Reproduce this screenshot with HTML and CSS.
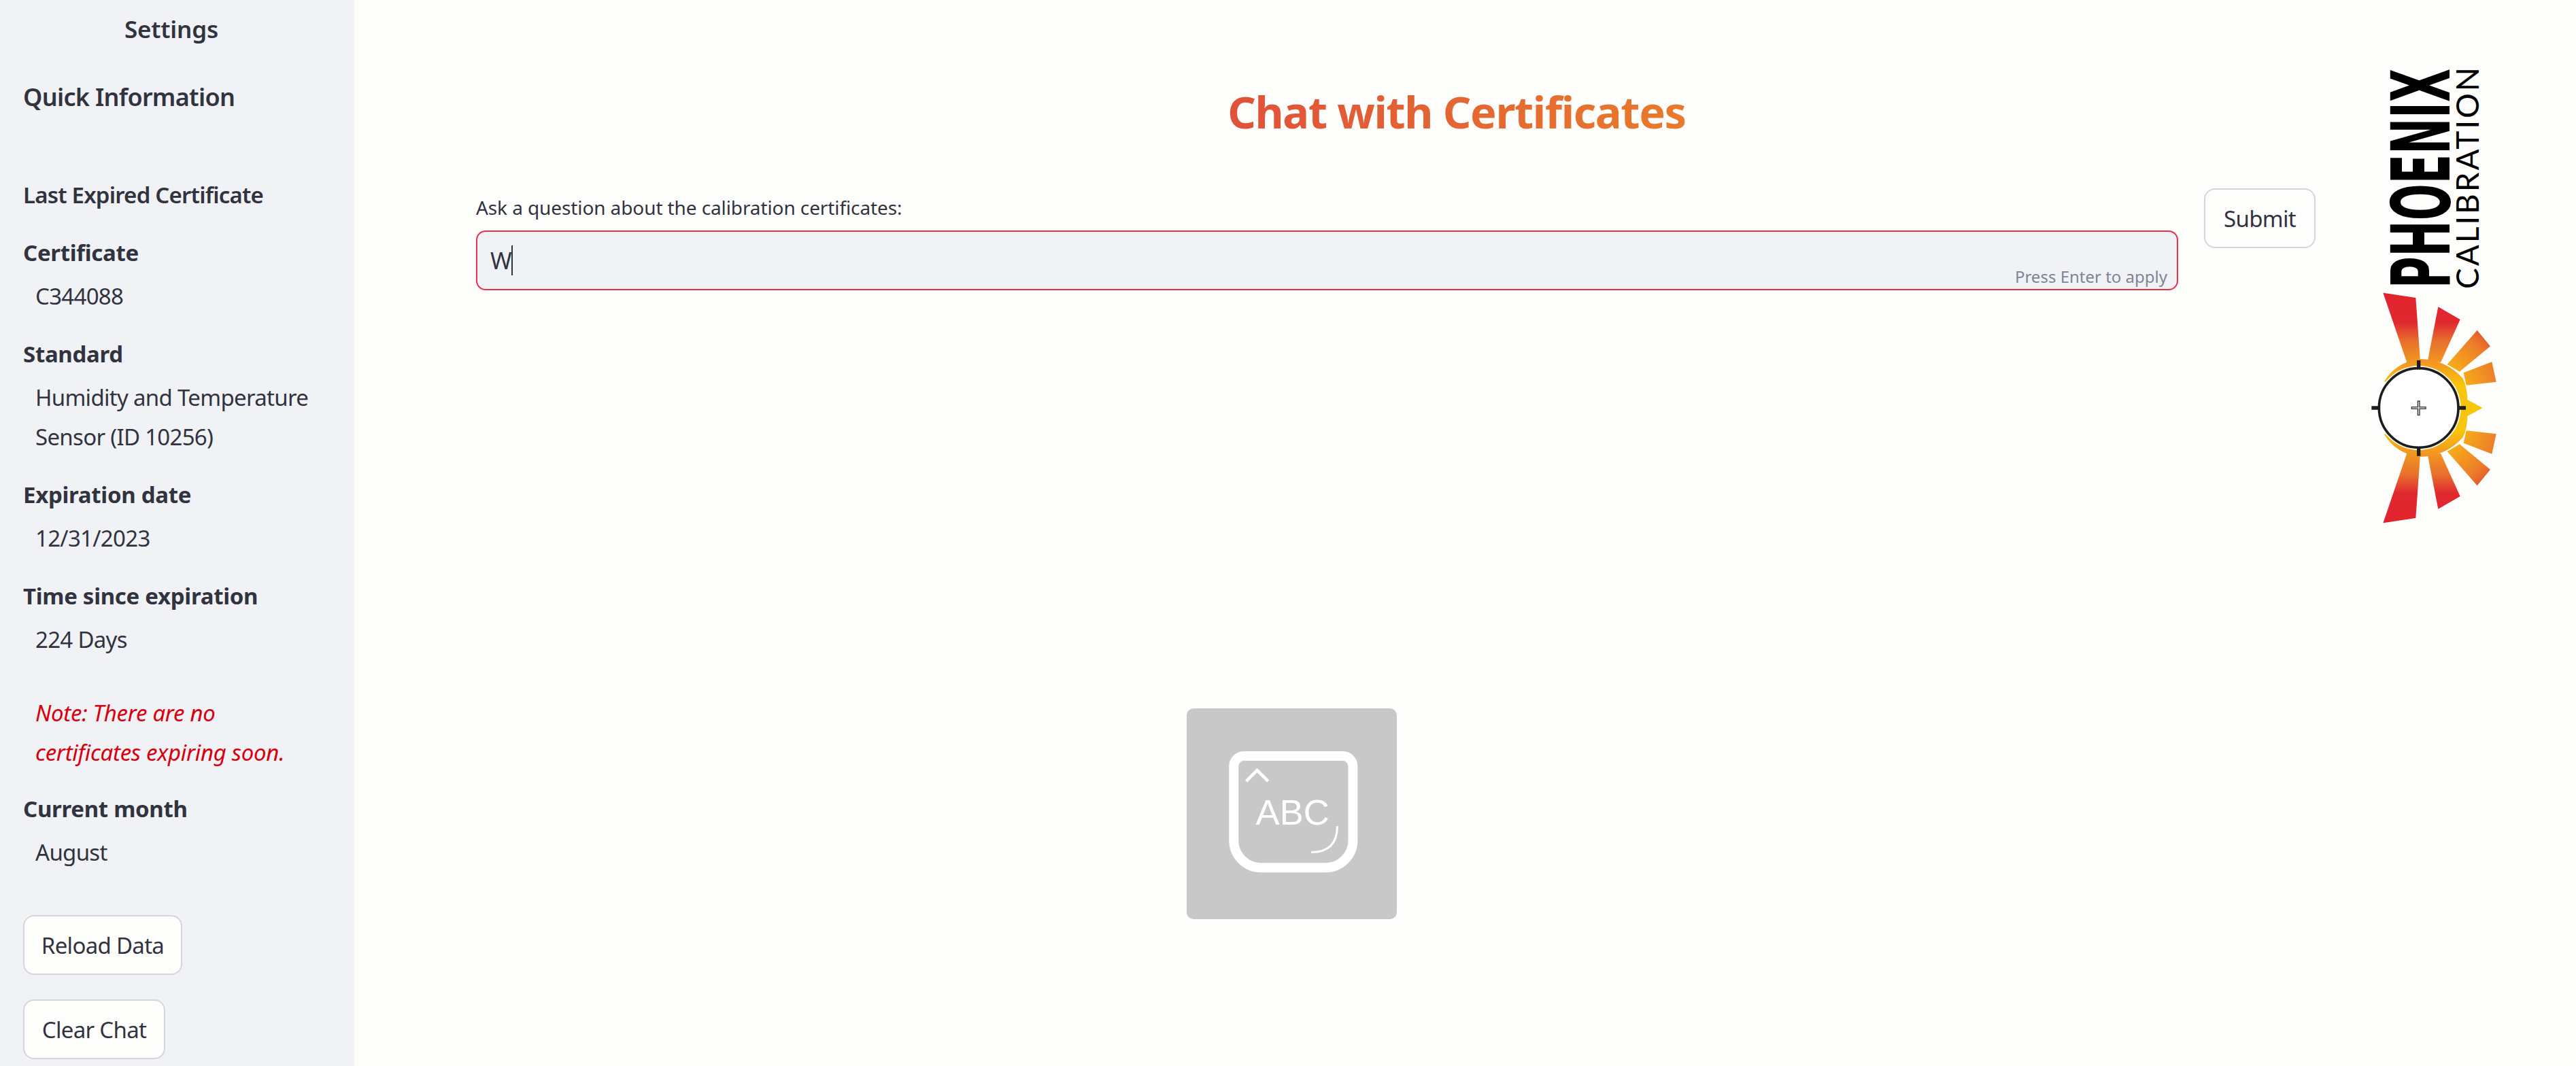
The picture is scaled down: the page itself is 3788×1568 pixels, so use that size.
FILE: index.html
```html
<!DOCTYPE html>
<html lang="en">
<head>
  <meta charset="UTF-8" />
  <title>Chat with Certificates</title>
  <link rel="stylesheet" href="styles.css">
</head>
<body>
  <aside class="sidebar">
    <div class="side-title">Settings</div>
    <h2 class="quick-title">Quick Information</h2>
    <div class="last-title">Last Expired Certificate</div>

    <div class="info-key">Certificate</div>
    <div class="info-val">C344088</div>
    <div class="info-key">Standard</div>
    <div class="info-val">Humidity and Temperature<br>Sensor (ID 10256)</div>
    <div class="info-key">Expiration date</div>
    <div class="info-val">12/31/2023</div>
    <div class="info-key">Time since expiration</div>
    <div class="info-val">224 Days</div>
    <div class="note">Note: There are no<br>certificates expiring soon.</div>
    <div class="info-key">Current month</div>
    <div class="info-val">August</div>

    <div class="side-buttons">
      <button class="btn btn-reload">Reload Data</button>
      <button class="btn btn-clear">Clear Chat</button>
    </div>
  </aside>

  <main class="main">
    <div class="content">
      <h1 class="page-title"><span>Chat with Certificates</span></h1>
      <div class="ask-row">
        <div class="ask-field">
          <label class="ask-label">Ask a question about the calibration certificates:</label>
          <div class="ask-input">
            <span class="typed">W</span><span class="caret"></span>
            <span class="hint">Press Enter to apply</span>
          </div>
        </div>
        <button class="btn btn-submit">Submit</button>
      </div>
    </div>

    <svg class="logo" viewBox="0 0 280 740" width="280" height="740">
      <defs>
        <linearGradient id="sunFill" gradientUnits="userSpaceOnUse" x1="0" y1="92" x2="0" y2="1108">
          <stop offset="0" stop-color="#e0242f"/>
          <stop offset=".13" stop-color="#e0282f"/>
          <stop offset=".21" stop-color="#e8702c"/>
          <stop offset=".31" stop-color="#f39a20"/>
          <stop offset=".4" stop-color="#f8c40c"/>
          <stop offset=".6" stop-color="#f8c40c"/>
          <stop offset=".69" stop-color="#f39a20"/>
          <stop offset=".79" stop-color="#e8702c"/>
          <stop offset=".87" stop-color="#e0282f"/>
          <stop offset="1" stop-color="#e0242f"/>
        </linearGradient>
        <radialGradient id="rayFill" gradientUnits="userSpaceOnUse" cx="350" cy="600" r="440">
          <stop offset=".5" stop-color="#f6b016"/>
          <stop offset=".65" stop-color="#f39a20"/>
          <stop offset=".85" stop-color="#ec7d29"/>
          <stop offset="1" stop-color="#e2552f"/>
        </radialGradient>
      </defs>
      <text class="logo-big" transform="translate(162 364) rotate(-90) scale(.5347 1)" textLength="604" lengthAdjust="spacingAndGlyphs">PHOENIX</text>
      <text class="logo-small" transform="translate(205 365) rotate(-90)" textLength="326">CALIBRATION</text>
      <g transform="translate(0 340) scale(.33333)">
        <g fill="url(#sunFill)">
          <polygon points="193,92 337,114 357,395 298,400"/>
          <polygon points="436,154 533,210 447,400 390,390"/>
          <polygon points="530,545 632,600 530,655"/>
          <polygon points="533,990 436,1046 390,810 447,800"/>
          <polygon points="337,1086 193,1108 298,800 357,805"/>
          <path d="M198 482Q250 400 350 384Q470 385 545 470Q570 520 565 600Q570 680 545 730Q470 815 350 816Q250 800 198 718L350 600Z"/>
        </g>
        <g fill="url(#rayFill)">
          <polygon points="608,257 666,328 530,440 476,408"/>
          <polygon points="673,397 692,485 560,500 548,445"/>
          <polygon points="692,715 673,803 548,755 560,700"/>
          <polygon points="666,872 608,943 476,792 530,760"/>
        </g>
        <circle cx="350" cy="600" r="186" fill="#fff"/>
        <circle cx="350" cy="600" r="175" fill="#fff" stroke="#1d1d1b" stroke-width="11"/>
        <path d="M350 390V430M350 772V812M142 600H180M525 600H558" stroke="#1d1d1b" stroke-width="16"/>
        <path d="M350 568V634M317 600H383" stroke="#3a3a3a" stroke-width="12"/>
        <path d="M350 572V630M321 600H379" stroke="#d8d8d8" stroke-width="4"/>
      </g>
    </svg>

    <div class="key-tile">
      <svg viewBox="135 65 928 930" width="309" height="310">
        <path d="M388 275H824A45 45 0 0 1 869 320V648A120 120 0 0 1 749 768H463A120 120 0 0 1 343 648V320A45 45 0 0 1 388 275Z" fill="none" stroke="#fff" stroke-width="42"/>
        <path d="M398 386L446 338L495 386" fill="none" stroke="#fff" stroke-width="14"/>
        <path d="M800 585Q800 700 685 700" fill="none" stroke="#fff" stroke-width="9"/>
        <text class="key-text" x="440" y="577" textLength="325" lengthAdjust="spacingAndGlyphs">ABC</text>
      </svg>
    </div>
  </main>
</body>
</html>
```

FILE: styles.css
```css
* { box-sizing: border-box; }
html, body {
  margin: 0;
  padding: 0;
  height: 100%;
  overflow: hidden;
  background: #fdfdfc;
  color: #31333f;
  font-family: "Noto Sans", sans-serif;
  font-size: 33px;
  letter-spacing: -.7px;
}
body { display: flex; }

.sidebar {
  width: 521px;
  height: 1568px;
  flex: none;
  padding: 14px 0 0 34px;
  background: #f0f2f6;
  line-height: 58px;
}
.side-title {
  padding-right: 51px;
  text-align: center;
  font-weight: 600;
  font-size: 35px;
  letter-spacing: -.2px;
}
.quick-title {
  margin: 41px 0 0;
  line-height: 60px;
  font-size: 36px;
  font-weight: 600;
  letter-spacing: -.7px;
}
.last-title {
  margin-top: 85px;
  font-size: 33px;
  font-weight: 600;
  letter-spacing: -.8px;
}
.info-key {
  margin-top: 27px;
  font-size: 33px;
  font-weight: 700;
  letter-spacing: -.3px;
}
.info-val {
  margin-top: 6px;
  padding-left: 18px;
}
.note {
  margin: 50px 0 -2px;
  padding-left: 18px;
  color: #d8000c;
  font-style: italic;
  letter-spacing: -.3px;
}
.side-buttons {
  display: flex;
  flex-direction: column;
  align-items: flex-start;
  gap: 36px;
  margin-top: 63px;
}

.btn {
  height: 88px;
  padding: 0;
  border: 2px solid #d5d6db;
  border-radius: 16px;
  background: #fdfdfc;
  color: #31333f;
  font-family: inherit;
  font-size: 33px;
  letter-spacing: -.7px;
  white-space: nowrap;
}
.btn-reload { width: 234px; }
.btn-clear { width: 209px; }
.btn-submit {
  width: 164px;
  flex: none;
}

.main {
  position: relative;
  flex: 1;
  display: flex;
  align-items: flex-start;
}
.content {
  width: 2705px;
  margin-left: 179px;
  flex: none;
}
.page-title {
  margin: 128px -179px 0 0;
  line-height: 72px;
  text-align: center;
  font-size: 65px;
  font-weight: 700;
  letter-spacing: -1.4px;
}
.page-title span {
  background: linear-gradient(90deg, #e0513a, #e87b2b);
  -webkit-background-clip: text;
  background-clip: text;
  color: transparent;
}
.ask-row {
  display: flex;
  align-items: flex-start;
  gap: 38px;
  margin-top: 77px;
}
.ask-field { flex: 1; }
.ask-label {
  display: block;
  line-height: 50px;
  margin-top: 3px;
  font-size: 28px;
  letter-spacing: -.1px;
}
.ask-input {
  position: relative;
  display: flex;
  align-items: center;
  height: 88px;
  margin-top: 9px;
  padding-left: 19px;
  border: 2px solid #e8324a;
  border-radius: 14px;
  background: #f0f2f6;
}
.typed { font-size: 34px; }
.caret {
  width: 2px;
  height: 44px;
  background: #31333f;
}
.hint {
  position: absolute;
  right: 14px;
  bottom: 0;
  line-height: 36px;
  color: #808495;
  font-size: 24px;
  letter-spacing: 0;
}

.logo {
  flex: none;
  margin: 60px 0 0 35px;
  letter-spacing: 0;
}
.logo-big {
  font-family: "DejaVu Sans", sans-serif;
  font-size: 119px;
  font-weight: 700;
}
.logo-small {
  font-family: "Lato", sans-serif;
  font-size: 46px;
  font-weight: 400;
}

.key-tile {
  position: absolute;
  left: 1224px;
  top: 1042px;
  width: 309px;
  height: 310px;
  border-radius: 10px;
  background: #c8c8c8;
}
.key-tile svg { display: block; }
.key-text {
  font-family: "Liberation Sans", sans-serif;
  font-size: 156px;
  fill: #fff;
  letter-spacing: 0;
}
```
